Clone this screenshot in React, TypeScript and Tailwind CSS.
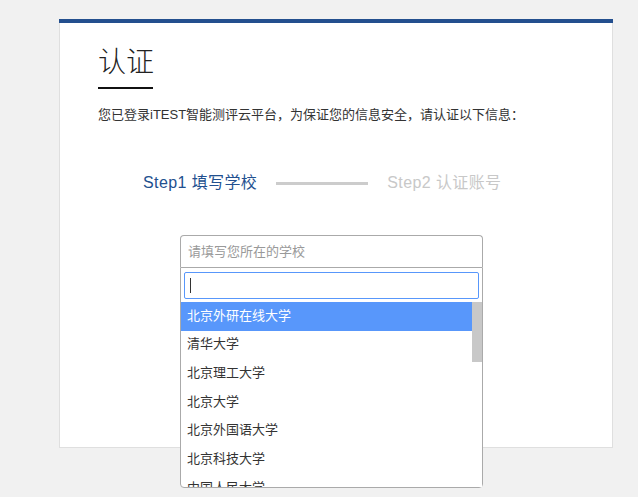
import React from 'react';

const schools = [
  '北京外研在线大学',
  '清华大学',
  '北京理工大学',
  '北京大学',
  '北京外国语大学',
  '北京科技大学',
  '中国人民大学',
];

const sans = { fontFamily: '"Liberation Sans", "Noto Sans CJK SC", sans-serif' };

export default function App() {
  return (
    <div className="min-h-[497px] bg-[#f1f1f1] pt-[19px] pl-[59px] text-[#333]" style={sans}>
      <div className="w-[554px] border-t-4 border-[#234f8e] bg-white">
        <div className="border-x border-b border-[#dfdfdf] pl-[38px] pt-[22px] pb-[180px]">
          {/* Title */}
          <h1
            className="text-[28px] leading-[36px] font-light text-[#222]"
            style={{ fontFamily: '"Liberation Serif", "Noto Sans CJK SC", serif' }}
          >
            认证
          </h1>
          <div className="mt-[6px] h-[2px] w-[55px] bg-[#111]" />

          <p className="mt-[16px] text-[13px] leading-[20px]">
            您已登录iTEST智能测评云平台，为保证您的信息安全，请认证以下信息：
          </p>

          {/* Steps */}
          <div className="mt-[46px] ml-[45px] flex items-center text-[16px] leading-[24px] tracking-[0.4px]">
            <span className="text-[#22508f]">Step1 填写学校</span>
            <span className="mx-[19px] h-[3px] w-[92px] bg-[#cccccc]" />
            <span className="text-[#c8c8c8]">Step2 认证账号</span>
          </div>

          {/* School select */}
          <div className="relative mt-[40px] ml-[82px] w-[303px]">
            <div className="flex h-[32px] items-center rounded-t-[4px] border border-b-0 border-[#aaaaaa] bg-white px-[7px] text-[13px] text-[#999]">
              请填写您所在的学校
            </div>
            <div className="absolute left-0 top-[32px] z-10 w-[303px] rounded-b-[4px] border border-[#aaaaaa] bg-white">
              <div className="px-[3px] pt-[4px] pb-[3px]">
                <div className="flex h-[27px] items-center rounded-[2px] border border-[#5897fb] px-[5px]">
                  <span className="h-[15px] w-[1px] bg-[#333]" />
                </div>
              </div>
              <div className="flex h-[185px] overflow-hidden">
                <ul className="flex-1 text-[13px]">
                  {schools.map((s, i) => (
                    <li
                      key={s}
                      className={
                        i === 0
                          ? 'flex h-[28.7px] items-center bg-[#5897fb] px-[6px] pb-[2px] text-white'
                          : 'flex h-[28.7px] items-center px-[6px] pb-[2px] text-[#333]'
                      }
                    >
                      {s}
                    </li>
                  ))}
                </ul>
                <div className="w-[10px] bg-white">
                  <div className="h-[60px] w-[10px] bg-[#c8c8c8]" />
                </div>
              </div>
            </div>
          </div>
        </div>
      </div>
    </div>
  );
}
